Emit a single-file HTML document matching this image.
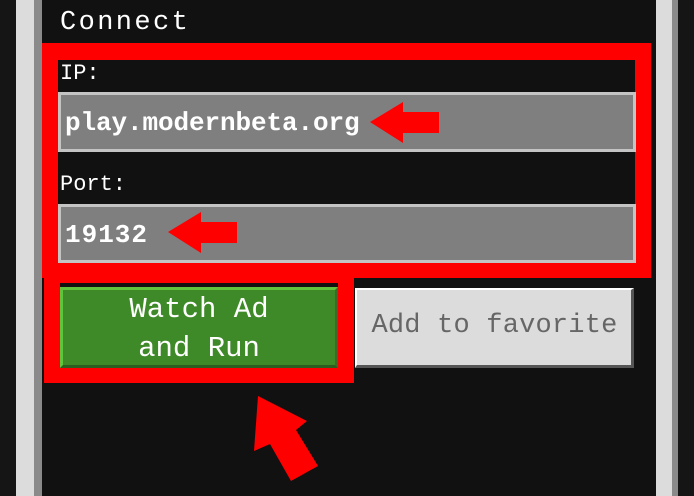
<!DOCTYPE html><html><head><style>
body{margin:0;width:694px;height:496px;background:#151515;position:relative;overflow:hidden;font-family:"Liberation Mono",monospace}
div{position:absolute;box-sizing:border-box}
.t{white-space:nowrap;line-height:1}
</style></head><body>
<div style="left:16px;top:0;width:18px;height:496px;background:#dcdcdc"></div>
<div style="left:34px;top:0;width:8px;height:496px;background:#8a8a8a"></div>
<div style="left:42px;top:0;width:614px;height:496px;background:#111"></div>
<div style="left:656px;top:0;width:16px;height:496px;background:#dcdcdc"></div>
<div style="left:672px;top:0;width:6px;height:496px;background:#8a8a8a"></div>
<div class="t" style="left:60px;top:10px;color:#fff;font-size:27px;letter-spacing:2.4px">Connect</div>
<div style="left:42px;top:43px;width:609px;height:235px;border:16px solid #f00;border-top-width:17px;border-bottom-width:15px"></div>
<div style="left:44px;top:270px;width:310px;height:113px;border:16px solid #f00;border-top-width:13px;border-bottom-width:15px"></div>
<div class="t" style="left:60px;top:63px;color:#fff;font-size:22px">IP:</div>
<div style="left:58px;top:92px;width:578px;height:60px;background:#7f7f7f;border:3px solid #c4c4c4"></div>
<div class="t" style="left:65px;top:110px;color:#fff;font-size:26px;letter-spacing:-0.1px;font-weight:bold">play.modernbeta.org</div>
<div class="t" style="left:60px;top:174px;color:#fff;font-size:22px">Port:</div>
<div style="left:58px;top:204px;width:578px;height:59px;background:#7f7f7f;border:3px solid #c4c4c4"></div>
<div class="t" style="left:65px;top:222px;color:#fff;font-size:26px;letter-spacing:1px;font-weight:bold">19132</div>
<div style="left:60px;top:287px;width:278px;height:81px;background:#3f8a28;border:3px solid #5fc43c;border-right-color:#3a6d28;border-bottom-color:#2e5e1f"></div>
<div class="t" style="left:60px;top:290px;width:278px;text-align:center;color:#fff;font-size:29px;line-height:39px">Watch Ad<br>and Run</div>
<div style="left:355px;top:288px;width:279px;height:80px;background:#dcdcdc;border:2px solid #fff;border-right:3px solid #555;border-bottom:3px solid #555"></div>
<div class="t" style="left:355px;top:313px;width:279px;text-align:center;color:#666;font-size:27px;letter-spacing:0.2px">Add to favorite</div>
<svg width="694" height="496" style="position:absolute;left:0;top:0">
<polygon fill="#f00" points="370,122 403,102 403,112 439,112 439,133 403,133 403,143"/>
<polygon fill="#f00" points="168,232 201,212 201,222 237,222 237,243 201,243 201,253"/>
<polygon fill="#f00" points="258,396 307,421 296,430 318,466 291,481 270,444 254,451"/>
</svg>
</body></html>
